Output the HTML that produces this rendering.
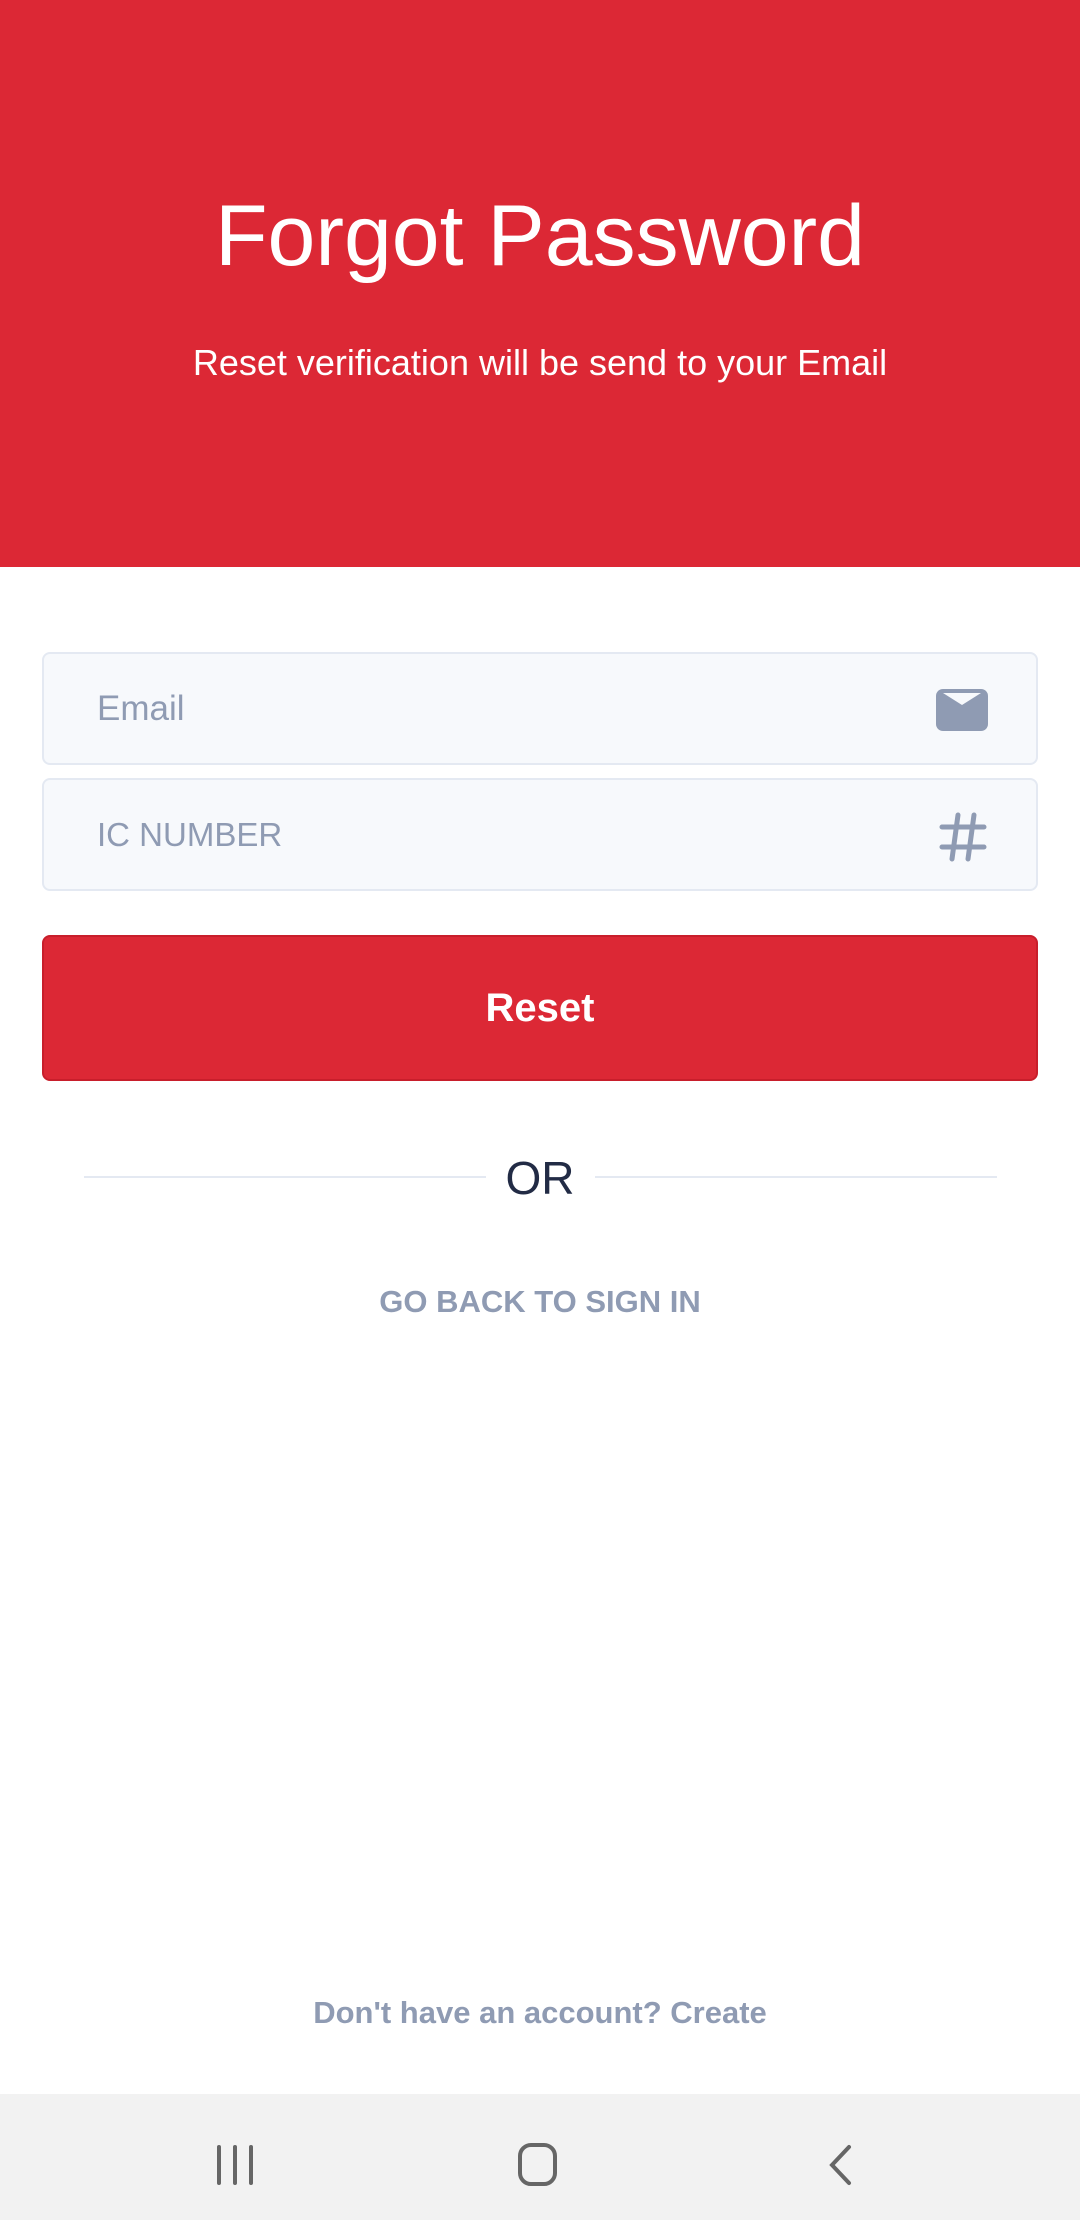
<!DOCTYPE html>
<html><head><meta charset="utf-8"><style>
*{margin:0;padding:0;box-sizing:border-box}
body{width:1080px;height:2220px;position:relative;background:#fff;font-family:"Liberation Sans",Roboto,sans-serif;overflow:hidden}
.hdr{position:absolute;left:0;top:0;width:1080px;height:567px;background:#dc2835;color:#fff;text-align:center}
.t{position:absolute;top:186px;width:100%;font-size:86px;line-height:100px}
.s{position:absolute;top:341px;width:100%;font-size:36px;line-height:44px}
.f{position:absolute;left:42px;width:996px;height:113px;background:#f7f9fc;border:2px solid #e4e9f2;border-radius:8px}
.f span{position:absolute;left:53px;top:0;line-height:109px;font-size:35px;color:#8f9bb3}
.btn{position:absolute;left:42px;top:935px;width:996px;height:146px;background:#dc2835;border:2px solid #c81e2b;border-radius:8px;color:#fff;font-weight:bold;font-size:40px;text-align:center;line-height:142px}
.ln{position:absolute;top:1176px;height:2px;background:#e4e9f2}
.or{position:absolute;top:1150px;width:100%;text-align:center;font-size:46px;color:#222b45;line-height:56px}
.lk{position:absolute;width:100%;text-align:center;font-weight:bold;color:#8f9bb3;font-size:31px}
.nav{position:absolute;left:0;top:2094px;width:1080px;height:126px;background:#f2f2f2}
</style></head><body>
<div class="hdr"><div class="t">Forgot Password</div><div class="s">Reset verification will be send to your Email</div></div>
<div class="f" style="top:652px"><span>Email</span>
<svg style="position:absolute;left:891px;top:34px" width="54" height="44" viewBox="0 0 54 44"><rect x="1" y="1" width="52" height="42" rx="7" fill="#8f9bb3"/><path d="M8 5 L27 17 L46 5" fill="#f7f9fc"/></svg></div>
<div class="f" style="top:778px"><span style="font-size:33px">IC NUMBER</span>
<svg style="position:absolute;left:894px;top:32px" width="50" height="50" viewBox="0 0 50 50" stroke="#8f9bb3" stroke-width="5" stroke-linecap="round" fill="none"><path d="M20 3 L14 47 M36 3 L30 47 M4 15 H46 M4 35 H46"/></svg></div>
<div class="btn">Reset</div>
<div class="ln" style="left:84px;width:402px"></div><div class="ln" style="left:595px;width:402px"></div>
<div class="or">OR</div>
<div class="lk" style="top:1284px">GO BACK TO SIGN IN</div>
<div class="lk" style="top:1995px">Don't have an account? Create</div>
<div class="nav">
<svg width="1080" height="126" viewBox="0 0 1080 126" fill="none" stroke="#666" stroke-width="4" stroke-linecap="round">
<path d="M219 53V89 M235 53V89 M251 53V89"/>
<rect x="520" y="51" width="35" height="39" rx="11"/>
<path d="M849 53 L832 71 L849 89"/></svg></div>
</body></html>
